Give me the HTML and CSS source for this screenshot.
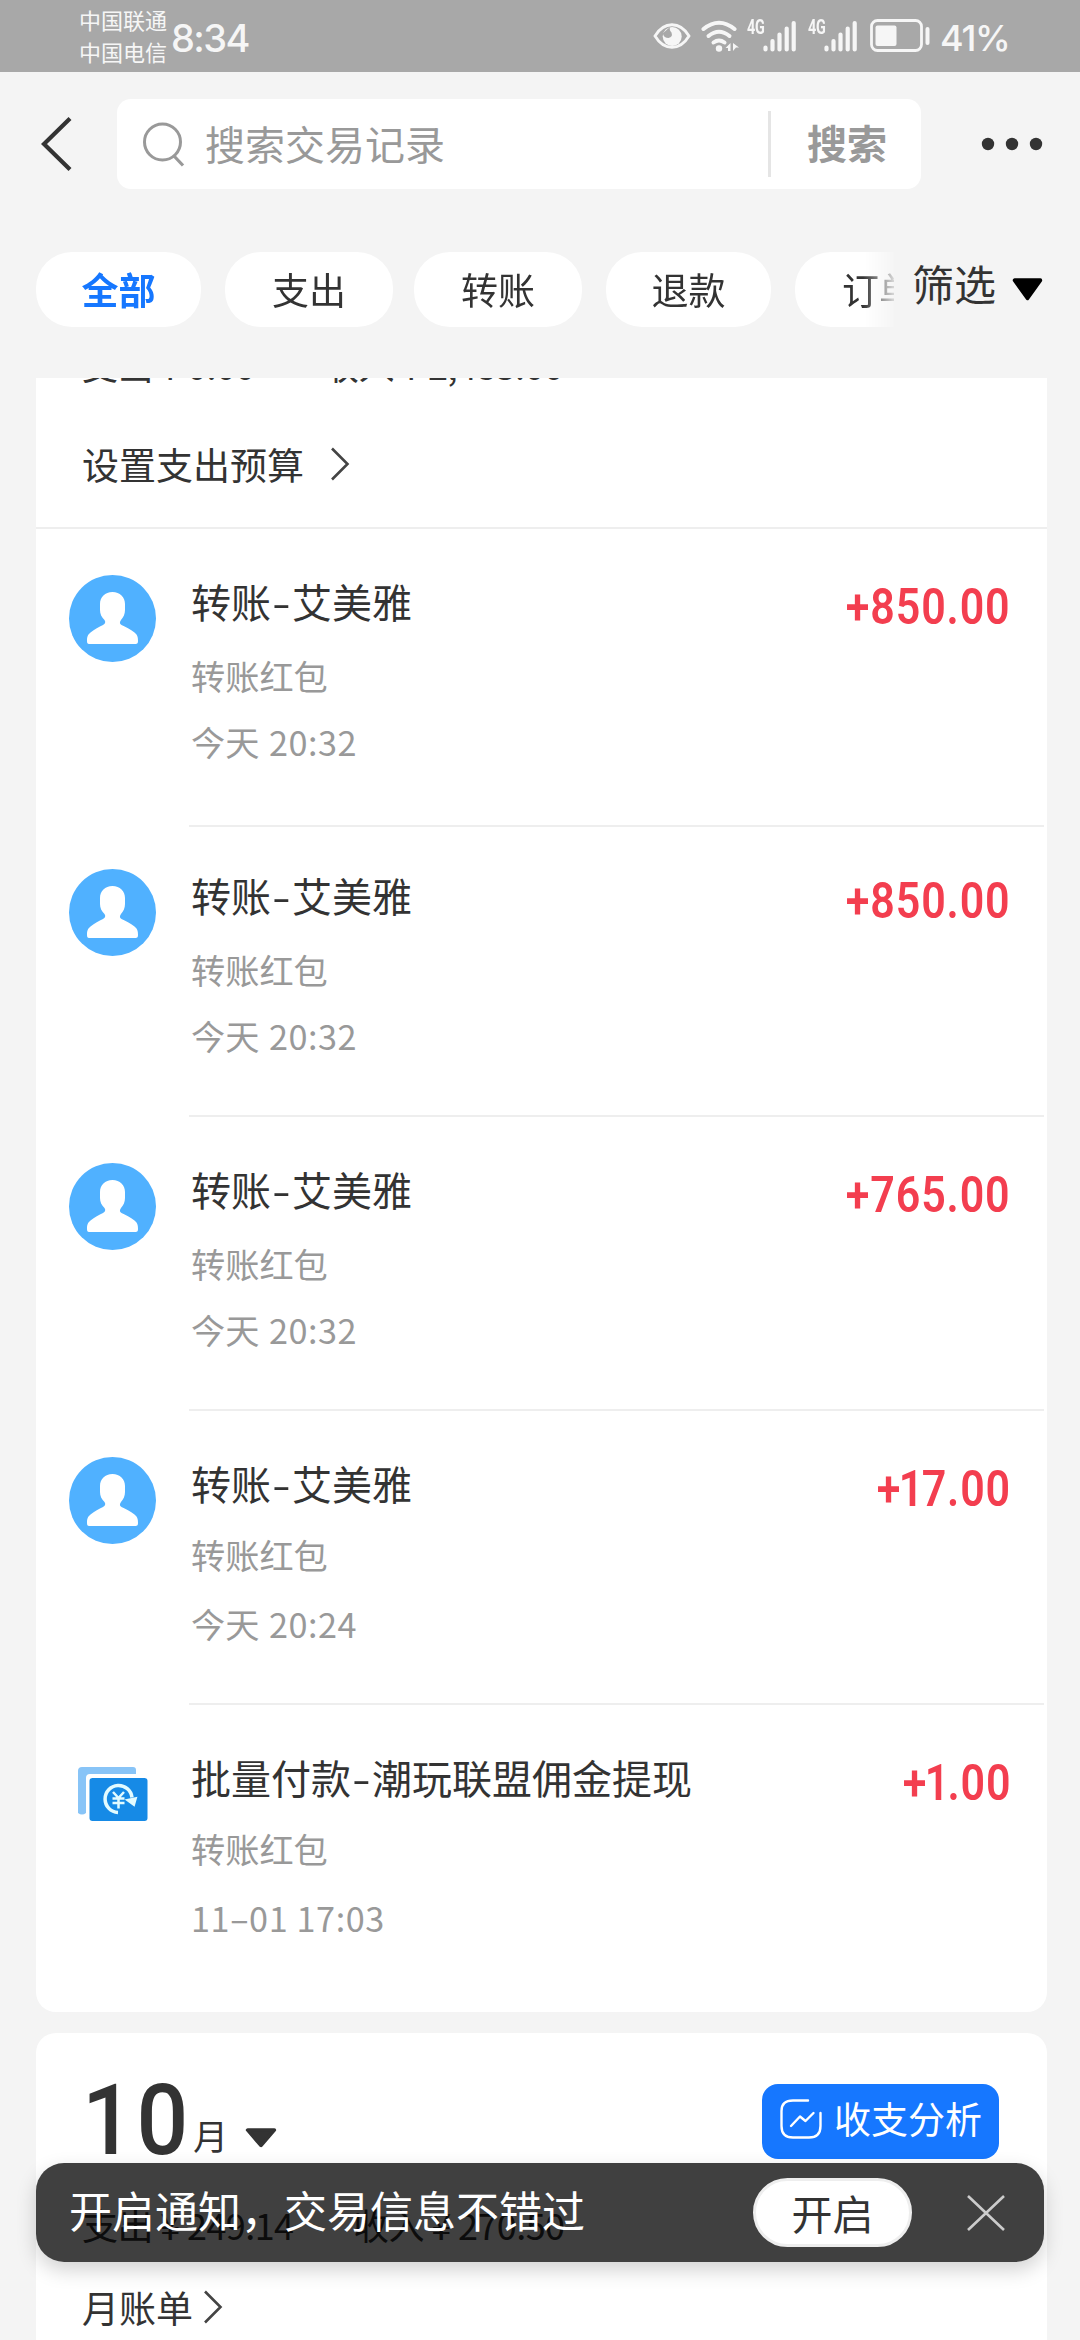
FILE: index.html
```html
<!DOCTYPE html>
<html lang="zh-CN">
<head>
<meta charset="utf-8">
<title>账单</title>
<link rel="stylesheet" href="styles.css">
</head>
<body>
<svg class="defs" width="0" height="0">
  <symbol id="user" viewBox="0 0 87 87">
    <circle cx="43.500" cy="43.500" r="43.500" fill="#50b1ff"/>
    <path fill="#fff" d="M43.500 17c7.500 0 12.500 5 12.500 12v6c0 4-1.500 7-4 10-1.500 2-1.500 4 .5 5 4 2 9 4 13 7.500 3 2.500 3.500 4.500 3.500 8.500 0 2-.5 3-2.500 3H20c-1.500 0-2-1-2-3 0-4 .5-6 3.500-8.500 4-3.500 8.500-5.500 12.500-7.500 2-1 3-3 1.500-5-3-3-4.500-6-4.500-10v-6c0-7 5-12 12.500-12z"/>
  </symbol>
  <symbol id="signal" viewBox="0 0 34 32">
    <path d="M2.500 27.500v2M9.500 21v8.500M16.500 14.500v15M23.700 8.500v21M30.700 3v26.500" stroke="#f6f6f6" stroke-width="4.200" stroke-linecap="round"/>
  </symbol>
  <symbol id="chevron" viewBox="0 0 20 34">
    <path d="M2 1.500L17.500 17 2 32.500" fill="none" stroke="#444" stroke-width="2.600"/>
  </symbol>
  <symbol id="caret" viewBox="0 0 30 20" preserveAspectRatio="none">
    <path d="M2.500 2h25L15 17.500z" fill="currentColor" stroke="currentColor" stroke-width="3.500" stroke-linejoin="round"/>
  </symbol>
</svg>
<div class="screen">
  <header class="status">
    <div class="carriers"><span>中国联通</span><span>中国电信</span></div>
    <span class="clock">8:34</span>
    <div class="status-icons">
      <svg class="eye" viewBox="0 0 38 28"><path d="M2 14C11-1 27-1 36 14 27 29 11 29 2 14z" fill="none" stroke="#f6f6f6" stroke-width="2.800"/><circle cx="19.200" cy="14.500" r="9.500" fill="#f6f6f6"/><path d="M9 12l8-7q-1 3 1.500 5.500Q20 15 15.500 16 11 16 10 12z" fill="#a8a8a8"/></svg>
      <svg class="wifi" viewBox="0 0 38 32"><g fill="none" stroke="#f6f6f6" stroke-width="4" stroke-linecap="round"><path d="M2.500 9Q18 -3.500 33.500 9"/><path d="M7.500 16Q18 7.500 28.500 16"/><path d="M12.500 22.500Q18 18.500 23.500 22.500"/></g><circle cx="18" cy="28.500" r="3.200" fill="#f6f6f6"/><path d="M29.500 23v8H27v-3h-2.500zM32 31v-8l6 4.500h-3z" fill="#f6f6f6"/></svg>
      <span class="net">4G</span><svg class="signal"><use href="#signal"/></svg>
      <span class="net net-second">4G</span><svg class="signal"><use href="#signal"/></svg>
      <svg class="battery" viewBox="0 0 60 34"><rect x="1.500" y="1.500" width="50" height="30" rx="6" fill="none" stroke="#f6f6f6" stroke-width="2.800"/><rect x="5.500" y="6.500" width="21" height="20.500" rx="2" fill="#f6f6f6"/><rect x="55.500" y="8" width="4" height="18" rx="2" fill="#f6f6f6"/></svg>
      <span class="percent">41%</span>
    </div>
  </header>
  <div class="topbar">
    <svg class="back" viewBox="0 0 32 54"><path d="M29 1.500L3 27l26 25.500" fill="none" stroke="#333" stroke-width="4.200"/></svg>
    <div class="search">
      <svg class="lens" viewBox="0 0 42 46"><circle cx="19.500" cy="21" r="18" fill="none" stroke="#999" stroke-width="3"/><path d="M31 35l9 9.500" stroke="#999" stroke-width="3.200"/></svg>
      <span class="placeholder">搜索交易记录</span>
      <span class="search-btn">搜索</span>
    </div>
    <svg class="more" viewBox="0 0 62 14"><g fill="#333"><circle cx="7" cy="7" r="6.200"/><circle cx="31" cy="7" r="6.200"/><circle cx="55" cy="7" r="6.200"/></g></svg>
  </div>
  <nav class="filters">
    <div class="chips">
      <span class="chip chip-edge active">全部</span><span class="chip">支出</span><span class="chip chip-third">转账</span><span class="chip chip-edge">退款</span><span class="chip">订单</span>
    </div>
    <span class="filter">筛选</span><svg class="caret"><use href="#caret"/></svg>
  </nav>
  <main class="content">
    <section class="card first">
      <div class="totals clipped"><span class="expense">支出 ¥ 0.00</span><span>收入 ¥ 2,483.00</span></div>
      <div class="budget">设置支出预算<svg class="chevron"><use href="#chevron"/></svg></div>
      <article class="row row-1"><svg class="avatar"><use href="#user"/></svg><div class="info"><h3>转账<i>-</i>艾美雅</h3><p class="kind">转账红包</p><p class="date">今天 <b class="time">20:32</b></p></div><span class="amount">+850.00</span></article>
      <article class="row"><svg class="avatar"><use href="#user"/></svg><div class="info"><h3>转账<i>-</i>艾美雅</h3><p class="kind">转账红包</p><p class="date">今天 <b class="time">20:32</b></p></div><span class="amount">+850.00</span></article>
      <article class="row"><svg class="avatar"><use href="#user"/></svg><div class="info"><h3>转账<i>-</i>艾美雅</h3><p class="kind">转账红包</p><p class="date">今天 <b class="time">20:32</b></p></div><span class="amount">+765.00</span></article>
      <article class="row row-tight"><svg class="avatar"><use href="#user"/></svg><div class="info"><h3>转账<i>-</i>艾美雅</h3><p class="kind">转账红包</p><p class="date">今天 <b class="time">20:24</b></p></div><span class="amount">+<span class="one">1</span>7.00</span></article>
      <article class="row row-tight last"><svg class="avatar" viewBox="0 4 87 87"><path d="M9 66V24q0-4 4-4h51q3 0 3 3v4H21q-4 0-4 4v35q-4 3-8 0z" fill="#88c4f7"/><rect x="20.500" y="31" width="58" height="43" rx="3" fill="#168ae6"/><path d="M49 65.500a13.500 13.500 0 1 1 14-15" fill="none" stroke="#e2fbff" stroke-width="3.500"/><path d="M58 53l9-2-2 7z" fill="#e2fbff" stroke="#e2fbff" stroke-width="2"/><path d="M44 45l5.500 6 5.500-6M49.500 51v10.500M43.500 51.500h12M43.500 56h12" fill="none" stroke="#e2fbff" stroke-width="2.500"/></svg><div class="info"><h3>批量付款<i>-</i>潮玩联盟佣金提现</h3><p class="kind">转账红包</p><p class="date"><b>11–01 17:03</b></p></div><span class="amount">+<span class="one">1</span>.00</span></article>
    </section>
    <section class="card month">
      <div class="month-head"><span class="num">10</span><span class="unit">月</span><svg class="caret-month"><use href="#caret"/></svg>
        <span class="analyze"><svg viewBox="0 0 42 40"><g fill="none" stroke="#fff" stroke-width="2.400" stroke-linecap="round" stroke-linejoin="round"><path d="M28 1.500H13Q1.500 1.500 1.500 12v15Q1.500 38.500 13 38.500h16Q40.500 38.500 40.500 27V14"/><path d="M11 27l9-9.500 5.500 4.500 8-8"/></g></svg>收支分析</span></div>
      <div class="totals"><span class="expense">支出 ¥ 249.14</span><span>收入 ¥ 270.50</span></div>
      <div class="bill">月账单<svg class="chevron"><use href="#chevron"/></svg></div>
    </section>
  </main>
  <aside class="toast"><span class="toast-text">开启通知，交易信息不错过</span><span class="enable">开启</span><svg class="close" viewBox="0 0 38 36"><path d="M1 1l36 34M37 1L1 35" stroke="#ccc" stroke-width="2.600"/></svg></aside>
</div>
</body>
</html>
```

FILE: styles.css
```css
* { box-sizing: border-box; }
body { margin: 0; background: #f4f4f4; color: #333; font-family: "Noto Sans CJK SC", sans-serif; }
h3, p { margin: 0; font-weight: 400; }
svg { display: block; flex: none; }
.defs { position: absolute; }
.screen { width: 1080px; height: 2340px; overflow: hidden; position: relative; display: flex; flex-direction: column; }

.status { height: 72px; flex: none; background: #a8a8a8; color: #f6f6f6; display: flex; align-items: center; padding: 0 72px 0 79px; font-family: Inter, "Noto Sans CJK SC", sans-serif; }
.carriers { display: flex; flex-direction: column; font: 400 22px/32px "Noto Sans CJK SC", sans-serif; width: 92px; padding-bottom: 2px; }
.clock { font-size: 38px; font-weight: 500; letter-spacing: -1.600px; padding-top: 3px; }
.status-icons { display: flex; align-items: center; margin-left: auto; }
.eye { width: 38px; height: 28px; margin-right: 10px; }
.wifi { width: 38px; height: 32px; margin-right: 8px; }
.net { width: 16px; font: 700 20px/16px Roboto, sans-serif; letter-spacing: -.5px; align-self: flex-start; white-space: nowrap; transform: scaleX(.72); transform-origin: left; margin-top: 6px; }
.net-second { margin-left: 11px; }
.signal { width: 34px; height: 32px; }
.battery { width: 60px; height: 34px; margin-left: 12px; }
.percent { width: 68px; margin-left: 10px; font-size: 36px; font-weight: 500; letter-spacing: -1.300px; white-space: nowrap; padding-top: 3px; }

.topbar { height: 144px; flex: none; display: flex; align-items: center; padding: 0 37px 0 41px; }
.back { width: 32px; height: 54px; margin-right: 44px; }
.search { width: 804px; height: 90px; background: #fff; border-radius: 14px; display: flex; align-items: center; padding-left: 26px; color: #999; font-size: 40px; }
.lens { width: 42px; height: 46px; margin-right: 20px; }
.placeholder { flex: 1; padding-bottom: 3px; }
.search-btn { width: 153px; height: 66px; line-height: 63px; border-left: 3px solid #e5e5e5; padding-left: 36px; font-weight: 700; }
.more { width: 62px; height: 14px; margin-left: 60px; }

.filters { height: 162px; flex: none; display: flex; align-items: flex-start; padding: 36px 0 0 36px; }
.chips { width: 858px; display: flex; overflow: hidden; gap: 24px; -webkit-mask-image: linear-gradient(90deg, #000 827px, rgba(0,0,0,.15) 858px); mask-image: linear-gradient(90deg, #000 827px, rgba(0,0,0,.15) 858px); }
.chip { width: 168px; height: 75px; flex: none; border-radius: 36px; background: #fff; font-size: 37px; line-height: 75px; text-align: center; }
.chip-edge { width: 165px; }
.chip-third { margin-left: -3px; }
.active { color: #1677ff; font-weight: 700; }
.filter { font-size: 42px; line-height: 62px; margin-left: 18px; }
.caret { width: 31px; height: 23px; color: #000; margin: 26px 0 0 16px; }

.content { flex: 1; padding: 0 33px 0 36px; display: flex; flex-direction: column; gap: 21px; overflow: hidden; }
.card { background: #fff; flex: none; overflow: hidden; }
.first { height: 1634px; border-radius: 0 0 20px 20px; }
.totals { display: flex; height: 50px; font-size: 36px; line-height: 50px; padding-left: 46px; white-space: nowrap; letter-spacing: -.6px; }
.expense { width: 271px; }
.clipped .expense { width: 241px; }
.totals.clipped { margin-top: -39px; }
.budget { height: 140px; padding: 12px 0 0 46px; border-bottom: 2px solid #eee; display: flex; align-items: center; font-size: 37px; }
.chevron { width: 20px; height: 34px; margin-left: 26px; }
.row { height: 294px; display: flex; padding: 46px 38px 0 33px; position: relative; }
.row::after { content: ""; position: absolute; left: 153px; right: 3px; bottom: 0; height: 2px; background: #eee; }
.row-1::after { bottom: -4px; }
.last::after { display: none; }
.avatar { width: 87px; height: 87px; margin-right: 35px; }
.info { flex: 1; }
.info h3 { font-size: 40px; line-height: 58px; margin-top: -3px; white-space: nowrap; }
.info i { font-style: normal; display: inline-block; width: 21px; text-align: center; transform: scaleX(1.350); }
.kind, .date { font-size: 34.200px; line-height: 50px; color: #999; }
.kind { margin-top: 20px; }
.date { margin-top: 16px; }
.date b { font-weight: 400; letter-spacing: .6px; }
.date .time { margin-left: 2px; letter-spacing: .5px; }
.row-tight .kind { margin-top: 17px; }
.row-tight .date { margin-top: 19px; }
.amount { font: 600 50px/58px Roboto, sans-serif; color: #f33e4f; letter-spacing: 1px; margin-top: 3px; margin-right: -2px; transform: scaleX(.86); transform-origin: right; }
.one { margin: 0 -3px; }

.month { height: 340px; border-radius: 20px; }
.month-head { height: 160px; display: flex; align-items: flex-start; padding: 0 48px 0 46px; }
.num { font: 500 98px/110px Roboto, sans-serif; letter-spacing: 3px; margin-top: 33px; width: 111px; transform: scaleX(.93); transform-origin: left; }
.unit { font-size: 35px; line-height: 50px; margin-top: 77px; }
.caret-month { width: 32px; height: 20px; margin: 95px 0 0 17px; }
.analyze { margin: 51px 0 0 auto; width: 237px; height: 75px; border-radius: 16px; background: #1677ff; color: #fff; font-size: 37px; line-height: 68px; display: flex; padding-left: 18px; gap: 12px; white-space: nowrap; }
.analyze svg { width: 42px; height: 40px; margin-top: 15px; }
.month .totals { margin-top: 6px; }
.bill { font-size: 37px; line-height: 56px; padding-left: 46px; margin-top: 30px; display: flex; align-items: center; }
.bill .chevron { margin-left: 10px; }

.toast { position: absolute; left: 36px; top: 2163px; width: 1008px; height: 99px; border-radius: 28px; background: rgba(0,0,0,.75); box-shadow: 0 8px 20px rgba(0,0,0,.18); color: #fff; display: flex; align-items: center; padding: 0 39px 0 33px; font-size: 43px; }
.toast-text { flex: 1; line-height: 84px; align-self: flex-start; padding-top: 4px; white-space: nowrap; }
.enable { width: 159px; height: 69px; border: 3px solid #eee; border-radius: 35px; background: #fff; color: #333; font-size: 41px; line-height: 62px; text-align: center; }
.close { width: 38px; height: 36px; margin-left: 55px; }
```
